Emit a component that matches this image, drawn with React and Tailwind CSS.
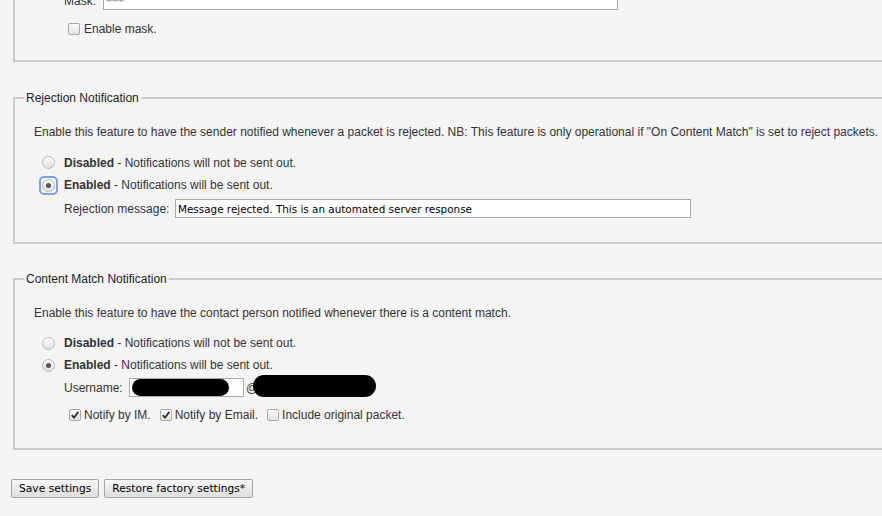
import React from "react";

const Radio = ({ checked, focused }) => (
  <span
    className={
      focused
        ? "inline-flex h-[15px] w-[15px] shrink-0 items-center justify-center rounded-[3px] outline-2 outline-[#7aa4e4] -ml-[1px] -mr-[1px]"
        : "inline-flex h-[13px] w-[13px] shrink-0 items-center justify-center"
    }
  >
    <span className="flex h-[13px] w-[13px] items-center justify-center rounded-full border border-[#b9b9b9] bg-gradient-to-b from-[#fbfbfb] to-[#e0e0e0]">
      {checked && <span className="h-[5px] w-[5px] rounded-full bg-[#555]" />}
    </span>
  </span>
);

const Check = ({ checked }) => (
  <span className="flex h-[12px] w-[12px] shrink-0 items-center justify-center rounded-[2px] border border-[#a9a9a9] bg-gradient-to-b from-[#fbfbfb] to-[#e1e1e1]">
    {checked && (
      <svg width="10" height="10" viewBox="0 0 10 10">
        <path d="M1.8 5.2 L4 7.6 L8.4 1.9" fill="none" stroke="#333" strokeWidth="1.8" />
      </svg>
    )}
  </span>
);

const TextInput = ({ w, children }) => (
  <div
    className={`flex h-[19px] items-center border border-[#a9a9a9] bg-white px-[2px] text-[10.4px] text-black ${w}`}
    style={{ fontFamily: '"DejaVu Sans", Verdana, sans-serif' }}
  >
    {children}
  </div>
);

const Btn = ({ children }) => (
  <button
    className="h-[19px] rounded-[2px] border border-[#a6a6a6] bg-gradient-to-b from-[#f8f8f8] to-[#dddddd] px-[7px] text-[10.7px] leading-[17px] text-black"
    style={{ fontFamily: '"DejaVu Sans", Verdana, sans-serif' }}
  >
    {children}
  </button>
);

export default function App() {
  return (
    <div
      className="min-h-[516px] w-full overflow-hidden bg-[#f4f4f4] text-[12px] leading-[14px] text-[#333]"
      style={{ fontFamily: '"Liberation Sans", Arial, sans-serif' }}
    >
      {/* Top (mask) fieldset, top edge scrolled off */}
      <fieldset className="-mt-[30px] ml-[13px] w-[900px] border-2 border-[#cccccc] pb-[25px] pl-[19px] pt-[19px]">
        <div className="flex h-[19px] items-center pl-[30px]">
          <span className="w-[39px]">Mask:</span>
          <TextInput w="w-[515px]">
            <span className="text-[12px]">***</span>
          </TextInput>
        </div>
        <div className="mt-[12px] flex h-[13px] items-center pl-[34px]">
          <Check />
          <span className="ml-[4px]">Enable mask.</span>
        </div>
      </fieldset>

      {/* Rejection Notification */}
      <fieldset className="ml-[13px] mt-[29px] w-[900px] border-2 border-[#cccccc] pb-[24px] pl-[19px] pt-[20px]">
        <legend className="-ml-[10px] px-[2px] leading-[14px] text-[#222]">Rejection Notification</legend>
        <p className="leading-[14px]">
          Enable this feature to have the sender notified whenever a packet is rejected. NB: This feature is only
          operational if "On Content Match" is set to reject packets.
        </p>
        <div className="mt-[12px] flex h-[23px] items-center pl-[8px]">
          <Radio />
          <span className="ml-[9px]">
            <b>Disabled</b> - Notifications will not be sent out.
          </span>
        </div>
        <div className="flex h-[22px] items-center pl-[8px]">
          <Radio checked focused />
          <span className="ml-[9px]">
            <b>Enabled</b> - Notifications will be sent out.
          </span>
        </div>
        <div className="mt-[3px] flex h-[19px] items-center pl-[30px]">
          <span className="w-[111px]">Rejection message:</span>
          <TextInput w="w-[516px]">Message rejected. This is an automated server response</TextInput>
        </div>
      </fieldset>

      {/* Content Match Notification */}
      <fieldset className="ml-[13px] mt-[28px] w-[900px] border-2 border-[#cccccc] pb-[22px] pl-[19px] pt-[20px]">
        <legend className="-ml-[10px] px-[2px] leading-[14px] text-[#222]">Content Match Notification</legend>
        <p className="leading-[14px]">
          Enable this feature to have the contact person notified whenever there is a content match.
        </p>
        <div className="mt-[12px] flex h-[22px] items-center pl-[8px]">
          <Radio />
          <span className="ml-[9px]">
            <b>Disabled</b> - Notifications will not be sent out.
          </span>
        </div>
        <div className="flex h-[22px] items-center pl-[8px]">
          <Radio checked />
          <span className="ml-[9px]">
            <b>Enabled</b> - Notifications will be sent out.
          </span>
        </div>
        <div className="mt-[2px] flex h-[19px] items-center pl-[30px]">
          <span className="w-[65px]">Username:</span>
          <TextInput w="w-[115px]">
            <span className="h-[17px] w-[97px] rounded-full bg-black" />
          </TextInput>
          <span className="relative ml-[2px]">@</span>
          <span className="relative -ml-[5px] -mt-[3px] h-[22px] w-[123px] rounded-full bg-black" />
        </div>
        <div className="mt-[7px] flex h-[22px] items-center pl-[35px]">
          <Check checked />
          <span className="ml-[3px]">Notify by IM.</span>
          <span className="ml-[9px]">
            <Check checked />
          </span>
          <span className="ml-[3px]">Notify by Email.</span>
          <span className="ml-[9px]">
            <Check />
          </span>
          <span className="ml-[3px]">Include original packet.</span>
        </div>
      </fieldset>

      <div className="ml-[11px] mt-[29px] flex gap-[5px]">
        <Btn>Save settings</Btn>
        <Btn>Restore factory settings*</Btn>
      </div>
    </div>
  );
}
